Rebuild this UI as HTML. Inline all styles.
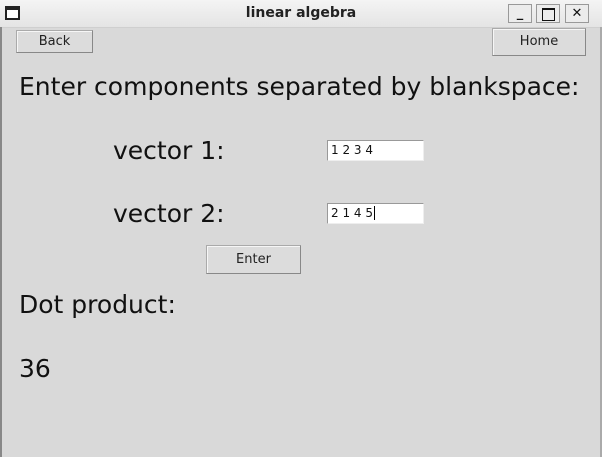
<!DOCTYPE html>
<html><head><style>
body{margin:0;width:602px;height:457px;overflow:hidden;background:#d9d9d9;font-family:"DejaVu Sans","Liberation Sans",sans-serif;position:relative}
.tb{position:absolute;left:0;top:0;width:602px;height:27px;background:linear-gradient(#f4f4f4,#e4e4e4);border-bottom:1px solid #cfcfcf}
.t{position:absolute;left:0;width:602px;top:5px;text-align:center;font-weight:bold;font-size:14px;color:#222}
.ic{position:absolute;left:5px;top:6px;width:15px;height:14px;border:2px solid #222;border-top:4px solid #222;box-sizing:border-box;background:#fff}
.wb{position:absolute;top:4px;width:24px;height:19px;border:1px solid #999;background:#ececec;box-sizing:border-box;font-size:13px;text-align:center;line-height:17px;color:#111}
.btn{position:absolute;background:#dcdcdc;border:1px solid #aaa;border-right-color:#888;border-bottom-color:#888;box-shadow:inset 1px 1px 0 #f6f6f6;font-size:13px;text-align:center;box-sizing:border-box;color:#222}
.l{position:absolute;font-size:25px;color:#111;white-space:nowrap}
.e{position:absolute;background:#fff;border:1px solid #999;border-right-color:#eee;border-bottom-color:#eee;box-sizing:border-box;font-size:12px;padding-left:3px;line-height:19px;color:#111}
</style></head><body>
<div class="tb"><div class="ic"></div><div class="t">linear algebra</div>
<div class="wb" style="left:508px;font-weight:bold">_</div><div class="wb" style="left:536px"><span style="display:inline-block;width:11px;height:10px;border:1px solid #111;border-top-width:2px;margin-top:3px;vertical-align:top"></span></div><div class="wb" style="left:565px;font-weight:bold">✕</div></div>
<div class="btn" style="left:16px;top:30px;width:77px;height:23px;line-height:21px">Back</div>
<div class="btn" style="left:492px;top:28px;width:94px;height:28px;line-height:26px">Home</div>
<div class="l" style="left:19px;top:72px">Enter components separated by blankspace:</div>
<div class="l" style="left:113px;top:136px">vector 1:</div>
<div class="e" style="left:327px;top:140px;width:97px;height:21px">1 2 3 4</div>
<div class="l" style="left:113px;top:199px">vector 2:</div>
<div class="e" style="left:327px;top:203px;width:97px;height:21px">2 1 4 5<span style="border-left:1px solid #000;margin-left:1px"></span></div>
<div class="btn" style="left:206px;top:245px;width:95px;height:29px;line-height:27px">Enter</div>
<div class="l" style="left:19px;top:290px">Dot product:</div>
<div class="l" style="left:19px;top:354px">36</div>
<div style="position:absolute;left:0;top:27px;width:2px;height:430px;background:#888"></div>
<div style="position:absolute;left:600px;top:27px;width:2px;height:430px;background:#aaa"></div>
</body></html>
